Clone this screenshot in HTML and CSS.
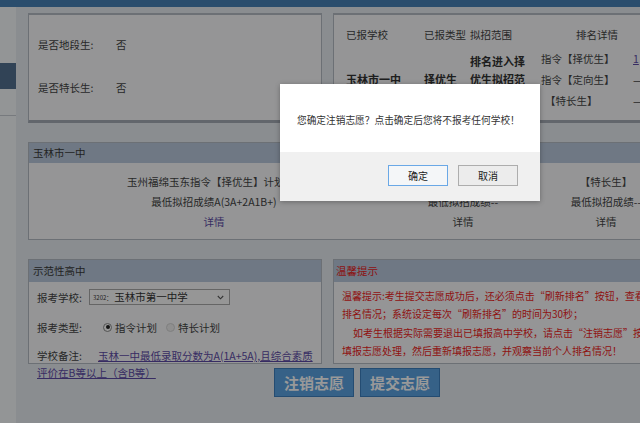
FILE: index.html
```html
<!DOCTYPE html>
<html lang="zh-CN">
<head>
<meta charset="utf-8">
<title>志愿填报</title>
<link rel="stylesheet" href="styles.css">
</head>
<body>
<div class="topbar"></div>
<div class="layout">
  <aside class="sidebar">
    <div class="side-active"></div>
    <div class="side-line"></div>
  </aside>
  <main class="main">
    <section class="row row-top">
      <div class="panel info">
        <div class="info-row"><span class="info-label">是否地段生:</span><span>否</span></div>
        <div class="info-row second"><span class="info-label">是否特长生:</span><span>否</span></div>
      </div>
      <div class="panel status">
        <div class="status-grid">
          <div class="th">已报学校</div>
          <div class="th">已报类型</div>
          <div class="th">拟招范围</div>
          <div class="th th-rank">排名详情</div>
          <div class="td strong c1">玉林市一中</div>
          <div class="td strong c2">择优生</div>
          <div class="td strong c3">排名进入择优生拟招范围</div>
          <div class="td c4 r1">指令【择优生】</div>
          <div class="td c5 r1"><a class="link" href="#">1</a></div>
          <div class="td c4 r2">指令【定向生】</div>
          <div class="td c5 r2">—</div>
          <div class="td c4 r3 indent">【特长生】</div>
          <div class="td c5 r3">—</div>
        </div>
      </div>
    </section>

    <section class="panel school">
      <div class="panel-head">玉林市一中</div>
      <div class="plan-grid">
        <div class="plan-col">
          <div>玉州福绵玉东指令【择优生】计划3人</div>
          <div>最低拟招成绩A(3A+2A1B+)</div>
          <div><a class="link plain" href="#">详情</a></div>
        </div>
        <div class="plan-col">
          <div>指令【定向生】计划0人</div>
          <div>最低拟招成绩--</div>
          <div>详情</div>
        </div>
        <div class="plan-col">
          <div>【特长生】</div>
          <div>最低拟招成绩--</div>
          <div>详情</div>
        </div>
      </div>
    </section>

    <section class="row row-bottom">
      <div class="panel form">
        <div class="panel-head tall">示范性高中</div>
        <div class="form-body">
          <div class="form-row">
            <span class="form-label">报考学校:</span>
            <span class="select"><span class="code">3202：</span><span class="select-text">玉林市第一中学</span>
              <svg class="chev" width="7" height="5" viewBox="0 0 7 5"><path d="M0.8 1 L3.5 3.8 L6.2 1" fill="none" stroke="#555" stroke-width="1.1"/></svg>
            </span>
          </div>
          <div class="form-row">
            <span class="form-label">报考类型:</span>
            <span class="radio checked"></span><span class="radio-text">指令计划</span>
            <span class="radio disabled"></span><span class="radio-text">特长计划</span>
          </div>
          <p class="note"><span class="note-label">学校备注:</span><a class="link" href="#">玉林一中最低录取分数为A(1A+5A),且综合素质评价在B等以上（含B等）</a></p>
        </div>
      </div>
      <div class="panel tips">
        <div class="panel-head tall red">温馨提示</div>
        <div class="tips-body">
          <p>温馨提示:考生提交志愿成功后，还必须点击“刷新排名”按钮，查看个人排名情况；系统设定每次“刷新排名”的时间为30秒；</p>
          <p class="indent-p">如考生根据实际需要退出已填报高中学校，请点击“注销志愿”按钮，填报志愿处理，然后重新填报志愿，并观察当前个人排名情况！</p>
        </div>
      </div>
    </section>

    <div class="actions">
      <button class="big-btn" type="button">注销志愿</button>
      <button class="big-btn" type="button">提交志愿</button>
    </div>
  </main>
</div>

<div class="mask"></div>
<div class="dialog" role="dialog">
  <div class="dialog-body">您确定注销志愿？点击确定后您将不报考任何学校！</div>
  <div class="dialog-foot">
    <button class="dlg-btn primary" type="button">确定</button>
    <button class="dlg-btn" type="button">取消</button>
  </div>
</div>
</body>
</html>
```

FILE: styles.css
```css
* { box-sizing: border-box; }
html, body {
  margin: 0;
  padding: 0;
  width: 640px;
  height: 423px;
  overflow: hidden;
}
body {
  position: relative;
  background: #e6ebf0;
  font-family: "Noto Sans CJK SC", "Liberation Sans", sans-serif;
  font-size: 10.5px;
  color: #444;
}
p { margin: 0; }

.topbar { height: 7px; background: #4680b6; }

.layout { display: flex; height: 416px; }

.sidebar {
  flex: none;
  width: 16px;
  background: #f6f8fa;
  padding-top: 56px;
}
.side-active { height: 26px; background: #53708f; }
.side-line { margin-top: 26px; border-top: 1px solid #c6ccd2; }

.main {
  flex: none;
  width: 658px;
  margin-left: 12px;
  padding-top: 6px;
  display: flex;
  flex-direction: column;
}

.panel {
  background: #f8f9fa;
  border: 1px solid #b4bbc3;
}

.row { display: grid; grid-template-columns: 294px 1fr; column-gap: 11px; }
.row-top { height: 110px; }
.row-top .panel { border-top-width: 2px; border-bottom: 3px solid #a3abb4; }

/* info panel */
.info { padding: 20px 0 0 9px; }
.info-row { display: flex; line-height: 20px; }
.info-row.second { margin-top: 23px; }
.info-label { width: 78px; }

/* status panel */
.status { padding: 10px 0 0 12px; }
.status-grid {
  display: grid;
  grid-template-columns: 78px 46px 71px 92px 20px;
  grid-template-rows: 23px 21px 21px 20px;
}
.th { line-height: 20px; white-space: nowrap; }
.th-rank { grid-column: 4 / span 2; text-align: center; }
.td { line-height: 21px; white-space: nowrap; }
.td.strong {
  grid-row: 2 / span 3;
  align-self: center;
  font-weight: bold;
  font-size: 11px;
  line-height: 18px;
  color: #333;
}
.c1 { grid-column: 1; }
.c2 { grid-column: 2; }
.td.c3 { grid-column: 3; white-space: normal; max-width: 56px; }
.c4 { grid-column: 4; }
.c5 { grid-column: 5; }
.r1 { grid-row: 2; }
.r2 { grid-row: 3; }
.r3 { grid-row: 4; }
.indent { padding-left: 4px; }

.link { color: #5d4aa6; text-decoration: underline; }
.link.plain { text-decoration: none; }

/* school plan panel */
.school { margin-top: 19px; height: 98px; }
.panel-head {
  height: 20px;
  line-height: 20px;
  padding-left: 4px;
  background: #b9c9dc;
  color: #3a3a3a;
}
.panel-head.tall { height: 22px; line-height: 22px; }
.panel-head.red { color: #e8221f; padding-left: 2px; }
.plan-grid {
  display: grid;
  grid-template-columns: 370px 128px 1fr;
  padding-top: 9px;
  text-align: center;
  line-height: 20px;
  white-space: nowrap;
}

/* bottom row */
.row-bottom { margin-top: 19px; height: 105px; }
.row-bottom .panel { height: 105px; }
.form-body { padding: 0 8px; }
.form-row { display: flex; align-items: center; height: 30px; }
.form-label { width: 52px; flex: none; }
.select {
  display: inline-flex;
  align-items: center;
  width: 141px;
  height: 16px;
  border: 1px solid #a8a8a8;
  background: #fbfbfb;
  padding-left: 3px;
  color: #333;
}
.code { font-size: 6px; margin-right: 2px; }
.select-text { font-size: 10.5px; line-height: 14px; }
.chev { margin-left: auto; margin-right: 5px; }
.radio {
  width: 9px;
  height: 9px;
  border-radius: 50%;
  border: 1px solid #8a8a8a;
  background: #fff;
  flex: none;
  position: relative;
}
.radio.checked { margin-left: 14px; }
.radio.checked::after {
  content: "";
  position: absolute;
  left: 1.5px;
  top: 1.5px;
  width: 4px;
  height: 4px;
  border-radius: 50%;
  background: #222;
}
.radio.disabled { margin-left: 9px; border-color: #d4d4d4; background: #eee; }
.radio-text { margin-left: 3px; }
.note { margin-top: 5px; line-height: 17px; }
.note-label { display: inline-block; width: 61px; }

.tips-body {
  padding: 5px 14px 0 8px;
  font-size: 10px;
  line-height: 18.3px;
  color: #ee1c1c;
}
.indent-p { text-indent: 11px; }

.actions {
  display: flex;
  justify-content: center;
  gap: 6px;
  margin-top: 4px;
}
.big-btn {
  width: 80px;
  height: 29px;
  border: 1px solid #3d7fbf;
  background: #5aa2e2;
  color: #fff;
  font-family: "Noto Sans CJK SC", sans-serif;
  font-weight: bold;
  font-size: 15px;
  padding: 0;
}

/* modal */
.mask {
  position: absolute;
  inset: 0;
  background: rgba(0, 0, 0, 0.4);
  z-index: 10;
}
.dialog {
  position: absolute;
  left: 280px;
  top: 84px;
  width: 260px;
  height: 117px;
  z-index: 11;
  background: #fff;
  box-shadow: 0 1px 5px rgba(0, 0, 0, 0.3);
  display: flex;
  flex-direction: column;
  color: #333;
}
.dialog-body {
  height: 68px;
  padding: 28px 0 0 17px;
  font-size: 9.7px;
  line-height: 16px;
  white-space: nowrap;
}
.dialog-foot {
  flex: 1;
  background: #f0f0f0;
  display: flex;
  justify-content: flex-end;
  align-items: flex-start;
  gap: 10px;
  padding: 13px 22px 0 0;
}
.dlg-btn {
  width: 60px;
  height: 21px;
  padding: 0;
  border: 1px solid #adadad;
  background: #ececec;
  font-family: "Noto Sans CJK SC", sans-serif;
  font-size: 10px;
  color: #222;
}
.dlg-btn.primary { border-color: #6aa8e6; background: #f4f6f8; }
```
